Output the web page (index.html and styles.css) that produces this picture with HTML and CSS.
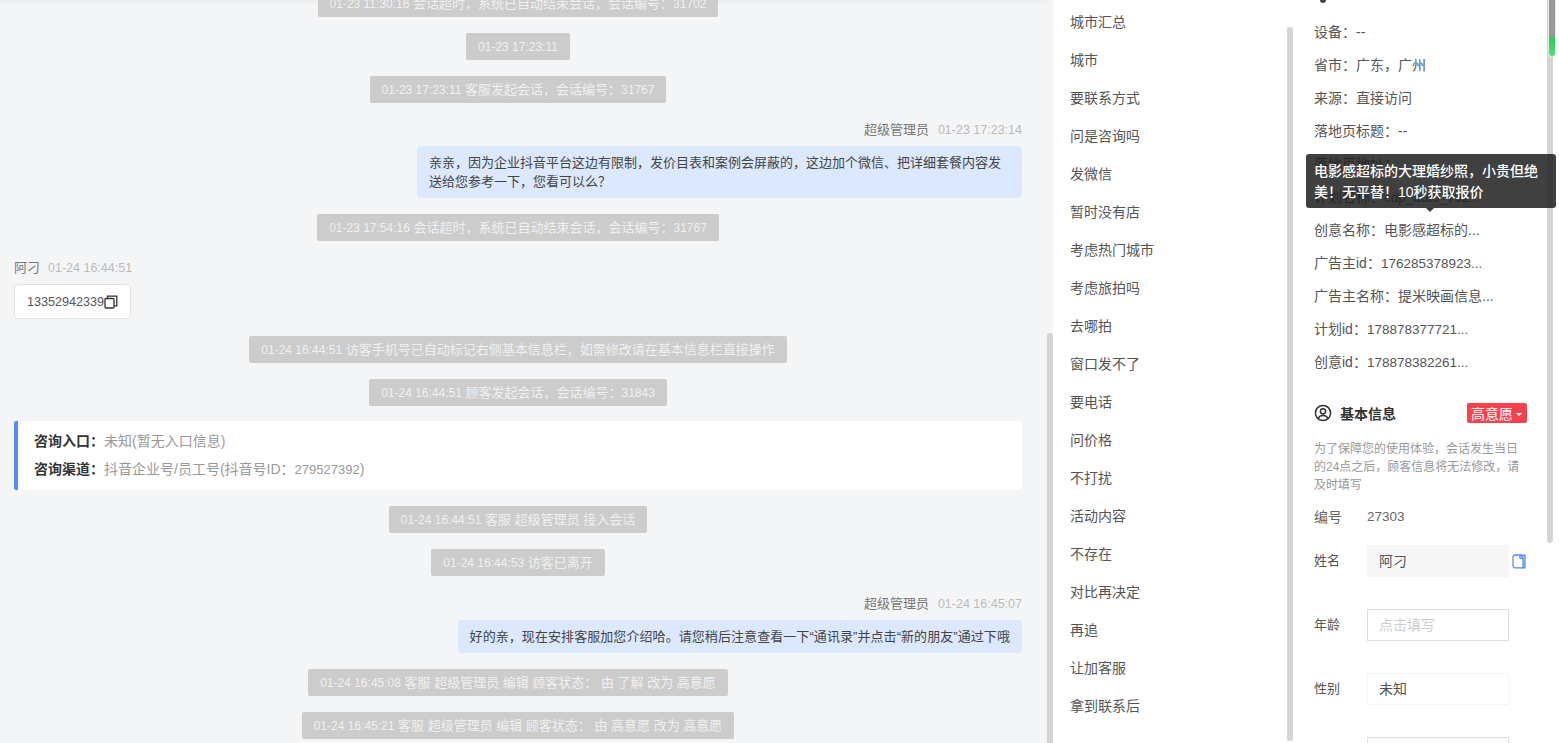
FILE: index.html
```html
<!DOCTYPE html>
<html lang="zh-CN">
<head>
  <meta charset="UTF-8">
  <meta name="viewport" content="width=device-width, initial-scale=1">
  <title>会话详情</title>
  <link rel="stylesheet" href="styles.css">
</head>
<body>
  <div class="chat">
    <div class="chat-list">
      <div class="sys"><span><i class="stamp">01-23 11:30:16</i> 会话超时，系统已自动结束会话，会话编号：<i class="stamp">31702</i></span></div>
      <div class="sys"><span><i class="stamp">01-23 17:23:11</i></span></div>
      <div class="sys"><span><i class="stamp">01-23 17:23:11</i> 客服发起会话，会话编号：<i class="stamp">31767</i></span></div>

      <div class="msg msg-right">
        <div class="msg-head"><span class="msg-name">超级管理员</span><span class="msg-time">01-23 17:23:14</span></div>
        <div class="bubble">亲亲，因为企业抖音平台这边有限制，发价目表和案例会屏蔽的，这边加个微信、把详细套餐内容发送给您参考一下，您看可以么？</div>
      </div>

      <div class="sys"><span><i class="stamp">01-23 17:54:16</i> 会话超时，系统已自动结束会话，会话编号：<i class="stamp">31767</i></span></div>

      <div class="msg msg-left">
        <div class="msg-head"><span class="msg-name">阿刁</span><span class="msg-time">01-24 16:44:51</span></div>
        <div class="phone-box">13352942339<svg class="copy-icon" width="14" height="14" viewBox="0 0 14 14" fill="none" stroke="#333" stroke-width="1.3"><rect x="1" y="3.5" width="9" height="9.5" rx="1"/><path d="M3.5 3.5V1.2h9.3v9.6H10"/></svg></div>
      </div>

      <div class="sys"><span><i class="stamp">01-24 16:44:51</i> 访客手机号已自动标记右侧基本信息栏，如需修改请在基本信息栏直接操作</span></div>
      <div class="sys"><span><i class="stamp">01-24 16:44:51</i> 顾客发起会话，会话编号：<i class="stamp">31843</i></span></div>

      <div class="entry-card">
        <p><b>咨询入口：</b>未知(暂无入口信息)</p>
        <p><b>咨询渠道：</b>抖音企业号/员工号(抖音号ID：<span class="num">279527392</span>)</p>
      </div>

      <div class="sys"><span><i class="stamp">01-24 16:44:51</i> 客服 超级管理员 接入会话</span></div>
      <div class="sys"><span><i class="stamp">01-24 16:44:53</i> 访客已离开</span></div>

      <div class="msg msg-right msg-late">
        <div class="msg-head"><span class="msg-name">超级管理员</span><span class="msg-time">01-24 16:45:07</span></div>
        <div class="bubble bubble-loose">好的亲，现在安排客服加您介绍哈。请您稍后注意查看一下“通讯录”并点击“新的朋友”通过下哦</div>
      </div>

      <div class="sys"><span><i class="stamp">01-24 16:45:08</i> 客服 超级管理员 编辑 顾客状态： 由 了解 改为 高意愿</span></div>
      <div class="sys"><span><i class="stamp">01-24 16:45:21</i> 客服 超级管理员 编辑 顾客状态： 由 高意愿 改为 高意愿</span></div>
    </div>
  </div>
  <div class="scroll scroll-chat"><div class="thumb"></div></div>

  <ul class="reply-list">
    <li>城市汇总</li>
    <li>城市</li>
    <li>要联系方式</li>
    <li>问是咨询吗</li>
    <li>发微信</li>
    <li>暂时没有店</li>
    <li>考虑热门城市</li>
    <li>考虑旅拍吗</li>
    <li>去哪拍</li>
    <li>窗口发不了</li>
    <li>要电话</li>
    <li>问价格</li>
    <li>不打扰</li>
    <li>活动内容</li>
    <li>不存在</li>
    <li>对比再决定</li>
    <li>再追</li>
    <li>让加客服</li>
    <li>拿到联系后</li>
  </ul>
  <div class="scroll scroll-list"><div class="thumb"></div></div>

  <div class="panel">
    <div class="panel-top"><i class="top-dot"></i></div>
    <div class="info-row">设备：--</div>
    <div class="info-row">省市：广东，广州</div>
    <div class="info-row">来源：直接访问</div>
    <div class="info-row">落地页标题：--</div>
    <div class="info-row">落地页地址：</div>
    <div class="info-row">计划名称：<span class="num">cdp_auto_792...</span></div>
    <div class="info-row">创意名称：电影感超标的...</div>
    <div class="info-row">广告主id：<span class="num">176285378923...</span></div>
    <div class="info-row">广告主名称：提米映画信息...</div>
    <div class="info-row">计划id：<span class="num">178878377721...</span></div>
    <div class="info-row">创意id：<span class="num">178878382261...</span></div>

    <div class="tooltip">电影感超标的大理婚纱照，小贵但绝美！无平替！10秒获取报价</div>

    <div class="section-head">
      <svg width="18" height="18" viewBox="0 0 18 18" fill="none" stroke="#333" stroke-width="1.5"><circle cx="9" cy="9" r="7.6"/><circle cx="9" cy="7.3" r="2.6"/><path d="M4.2 14.4c1-2 2.8-2.8 4.8-2.8s3.8.8 4.8 2.8"/></svg>
      <span class="section-title">基本信息</span>
      <span class="level-tag">高意愿<i class="caret"></i></span>
    </div>
    <p class="note">为了保障您的使用体验，会话发生当日的24点之后，顾客信息将无法修改，请及时填写</p>

    <div class="id-row"><label>编号</label><span>27303</span></div>
    <div class="form-row">
      <label>姓名</label>
      <div class="field field-off">阿刁</div>
      <svg class="doc-icon" width="14" height="15" viewBox="0 0 14 15" stroke="#4f86ee" stroke-width="1.2"><path d="M3 3V1.2h10v12.6h-2" fill="#c4d8fa"/><path d="M1 3.2c0-1 .8-2 2-2h5.5L11 4v9.8H3c-1.2 0-2-.8-2-2z" fill="#fff"/><path d="M8 1.5V4.5h3" fill="none"/></svg>
    </div>
    <div class="form-row"><label>年龄</label><div class="field field-empty">点击填写</div></div>
    <div class="form-row"><label>性别</label><div class="field field-light">未知</div></div>
    <div class="form-row"><label></label><div class="field field-empty"></div></div>
  </div>
  <div class="scroll scroll-panel"><div class="thumb"></div></div>
  <div class="edge"></div>

  <div class="float-bar"></div>
</body>
</html>
```

FILE: styles.css
```css
* {
  box-sizing: border-box;
}
html, body {
  height: 100%;
}
body {
  margin: 0;
  display: flex;
  overflow: hidden;
  background-color: #fff;
  color: #555;
  font-family: "Liberation Sans", "Noto Sans CJK SC", sans-serif;
  font-size: 13px;
}
.num {
  font-size: 13px;
}

/* chat column */
.chat {
  width: 1047px;
  height: 100%;
  overflow: hidden;
  background-color: #f4f5f7;
  box-shadow: inset 0 4px 4px -2px rgba(0,0,0,0.05);
}
.chat-list {
  margin-top: -10px;
  padding: 0 25px 0 14px;
}
.sys {
  display: flex;
  justify-content: center;
  margin-bottom: 16px;
}
.sys span {
  height: 27px;
  padding: 0 12px;
  border-radius: 2px;
  background-color: #ccc;
  color: #f0f0f0;
  line-height: 27px;
  white-space: nowrap;
}
.stamp {
  font-size: 12px;
  font-style: normal;
}
.msg {
  margin-bottom: 16px;
}
.msg-left {
  margin-bottom: 17px;
}
.msg-left .msg-name {
  margin-right: 8px;
}
.msg-right {
  display: flex;
  flex-direction: column;
  align-items: flex-end;
}
.msg-late {
  padding-top: 1px;
}
.msg-head {
  height: 22px;
  margin-bottom: 5px;
  line-height: 22px;
}
.msg-name {
  margin-right: 9px;
  color: #777;
}
.msg-time {
  color: #bbb;
  font-size: 12.5px;
}
.bubble {
  max-width: 605px;
  padding: 7px 12px;
  border-radius: 4px;
  background-color: #dbe8fd;
  color: #444;
  line-height: 19px;
}
.bubble-loose {
  letter-spacing: 0.07px;
}
.phone-box {
  display: inline-flex;
  align-items: center;
  height: 35px;
  padding: 0 12px;
  border: 1px solid #e2e2e2;
  border-radius: 4px;
  background-color: #fff;
  font-size: 12.6px;
  vertical-align: top;
}
.entry-card {
  height: 69px;
  margin: -1px 0 16px;
  padding: 6px 16px;
  border-left: 4px solid #4f8ff7;
  border-radius: 2px;
  background-color: #fff;
  color: #999;
  font-size: 14px;
}
.entry-card p {
  margin: 0;
  line-height: 28px;
}
.entry-card b {
  color: #333;
}

/* scrollbars */
.scroll {
  flex: none;
  width: 6px;
  height: 100%;
  background-color: #fff;
}
.thumb {
  border-radius: 3px 3px 0 0;
  background-color: #d4d4d4;
}
.scroll-chat {
  background-color: #f4f5f7;
}
.scroll-chat .thumb {
  height: 410px;
  margin-top: 333px;
}
.scroll-list .thumb {
  height: 714px;
  margin-top: 27px;
  border-radius: 3px;
}
.scroll-panel .thumb {
  height: 543px;
  border-radius: 0 0 3px 3px;
}
.edge {
  flex: none;
  width: 6px;
}
.float-bar {
  position: absolute;
  top: 0;
  left: 1548px;
  width: 8px;
  height: 57px;
  border: 1px solid #e8e8e8;
  border-top: none;
  border-radius: 0 0 4px 4px;
  background: linear-gradient(#999 0, #999 36px, #2fc75e 38px, #53e07e 56px);
}

/* quick replies */
.reply-list {
  flex: none;
  width: 234px;
  height: 100%;
  margin: 0;
  padding: 3px 0 0;
  overflow: hidden;
  list-style: none;
  font-size: 14px;
}
.reply-list li {
  height: 38px;
  padding-left: 17px;
  line-height: 38px;
}

/* right info panel */
.panel {
  position: relative;
  z-index: 2;
  flex: none;
  width: 254px;
  height: 100%;
  padding: 0 20px 0 21px;
  font-size: 14px;
}
.panel-top {
  height: 16px;
}
.top-dot {
  display: block;
  width: 6px;
  height: 3px;
  margin-left: 6px;
  border-radius: 0 0 3px 3px;
  background-color: #444;
}
.info-row {
  height: 33px;
  line-height: 33px;
  white-space: nowrap;
}
.info-row .num {
  font-size: 13.5px;
}
.tooltip {
  position: absolute;
  top: 154px;
  left: 13px;
  width: 250px;
  height: 54px;
  padding: 7px 8px 0;
  border-radius: 3px;
  background-color: rgba(30,30,30,0.85);
  color: #fff;
  font-size: 14px;
  font-weight: 500;
  line-height: 21px;
}
.tooltip::after {
  content: "";
  position: absolute;
  top: 100%;
  left: 120px;
  border: 4px solid transparent;
  border-top-color: #3c3c3c;
}
.section-head {
  display: flex;
  align-items: center;
  height: 20px;
  margin-top: 24px;
}
.section-title {
  margin-left: 8px;
  color: #333;
  font-weight: bold;
}
.level-tag {
  display: flex;
  align-items: center;
  height: 20px;
  margin-left: auto;
  padding: 0 5px 0 4px;
  border-radius: 2px;
  background-color: #f5424f;
  color: #fff;
}
.caret {
  margin: 2px 0 0 3px;
  border: 3.5px solid transparent;
  border-top-color: #fff;
  border-bottom: none;
}
.note {
  margin: 17px 0 11px;
  color: #999;
  font-size: 12px;
  line-height: 18px;
}
.id-row {
  display: flex;
  height: 24px;
  margin-bottom: 16px;
  color: #666;
  line-height: 24px;
}
.id-row span {
  font-size: 13.5px;
}
.id-row label, .form-row label {
  flex: none;
  width: 53px;
}
.form-row {
  display: flex;
  align-items: center;
  height: 32px;
  margin-bottom: 32px;
}
.form-row label {
  font-size: 13px;
  line-height: 30px;
}
.field {
  flex: none;
  width: 142px;
  height: 32px;
  padding: 0 11px;
  border: 1px solid #f5f5f5;
  line-height: 30px;
}
.field-off {
  background-color: #f7f7f7;
}
.field-empty {
  border-color: #ddd;
  color: #ccc;
}
.doc-icon {
  flex: none;
  margin-left: 3px;
}
```
